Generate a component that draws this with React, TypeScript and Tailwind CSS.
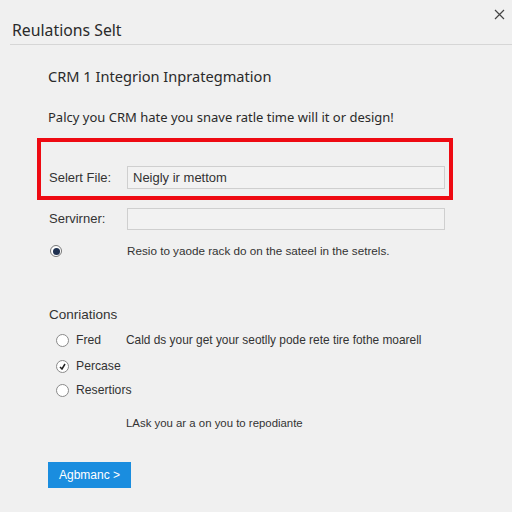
import React from "react";

export default function App() {
  const font = { fontFamily: '"Noto Sans", "Open Sans", sans-serif' };
  const lib = { fontFamily: '"Liberation Sans", Arial, sans-serif' };
  return (
    <div
      className="relative w-[512px] h-[512px] overflow-hidden bg-[#f0f0f0] text-[#222]"
      style={font}
    >
      <button className="absolute right-[6px] top-[7px] w-[14px] h-[14px] flex items-center justify-center text-[#444]">
        <svg width="11" height="11" viewBox="0 0 11 11" stroke="currentColor" strokeWidth="1.2">
          <path d="M1 1 L10 10 M10 1 L1 10" />
        </svg>
      </button>
      <div className="pl-[12px] pt-[18px] h-[44px]">
        <div className="text-[15.8px] leading-[24px] text-[#2a2a2a]">Reulations Selt</div>
      </div>
      <div className="ml-[10px] h-px bg-[#d6d6d6]" />

      <div className="pl-[48px]">
        <div className="mt-[20px] text-[14.6px] leading-[22px] text-[#2a2a2a]">
          CRM 1 Integrion Inprategmation
        </div>
        <div className="mt-[20px] text-[13px] leading-[20px] text-[#2a2a2a]">
          Palcy you CRM hate you snave ratle time will it or design!
        </div>

        <div className="mt-[11px] -ml-[11px] w-[416px] h-[62px] border-4 border-[#ee0a12] pl-[8px] pr-[4px] pt-[24px]">
          <div className="flex items-center">
            <div className="w-[78px] text-[13px] text-[#333]" style={lib}>Selert File:</div>
            <div className="flex-1 h-[23px] border border-[#cfcfcf] bg-[#f2f2f2] flex items-center pl-[5px] text-[13px] text-[#333]" style={lib}>
              Neigly ir mettom
            </div>
          </div>
        </div>

        <div className="mt-[8px] flex items-center">
          <div className="w-[79px] pl-px text-[13px] text-[#333]" style={lib}>Servirner:</div>
          <div className="w-[318px] h-[22px] border border-[#cfcfcf] bg-[#f2f2f2]" />
        </div>

        <div className="mt-[14px] flex items-center h-[14px]">
          <div className="w-[79px] pl-[2px] flex items-center">
            <div className="w-[12px] h-[12px] rounded-full border border-[#777] bg-white flex items-center justify-center">
              <div className="w-[7px] h-[7px] rounded-full bg-[#1e3050]" />
            </div>
          </div>
          <div className="text-[11.7px] text-[#333]" style={lib}>
            Resio to yaode rack do on the sateel in the setrels.
          </div>
        </div>

        <div className="mt-[48px] text-[13.5px] leading-[18px] pl-px text-[#333]" style={lib}>Conriations</div>

        <div className="mt-[8px] flex items-center h-[16px]">
          <div className="w-[78px] pl-[8px] flex items-center">
            <div className="w-[13px] h-[13px] rounded-full border border-[#8a8a8a] bg-white" />
            <div className="ml-[7px] text-[12.2px] text-[#333]" style={lib}>Fred</div>
          </div>
          <div className="pt-[2px] text-[11.9px] text-[#333]" style={lib}>
            Cald ds your get your seotlly pode rete tire fothe moarell
          </div>
        </div>

        <div className="mt-[10px] flex items-center h-[16px]">
          <div className="pl-[8px] flex items-center">
            <div className="w-[13px] h-[13px] rounded-full border border-[#8a8a8a] bg-white flex items-center justify-center">
              <svg width="7" height="7" viewBox="0 0 7 7">
                <path d="M1 4 L3 6 L6 1" stroke="#222" strokeWidth="1.5" fill="none" />
              </svg>
            </div>
            <div className="ml-[7px] text-[12.2px] text-[#333]" style={lib}>Percase</div>
          </div>
        </div>

        <div className="mt-[8px] flex items-center h-[16px]">
          <div className="pl-[8px] flex items-center">
            <div className="w-[13px] h-[13px] rounded-full border border-[#8a8a8a] bg-white" />
            <div className="ml-[7px] text-[12.2px] text-[#333]" style={lib}>Resertiors</div>
          </div>
        </div>

        <div className="mt-[17px] pl-[78px] text-[11.4px] leading-[16px] text-[#333]" style={lib}>
          LAsk you ar a on you to repodiante
        </div>

        <button className="mt-[31px] w-[83px] h-[26px] bg-[#1a8ddf] text-white text-[12px] flex items-center justify-center" style={lib}>
          Agbmanc &gt;
        </button>
      </div>
    </div>
  );
}
